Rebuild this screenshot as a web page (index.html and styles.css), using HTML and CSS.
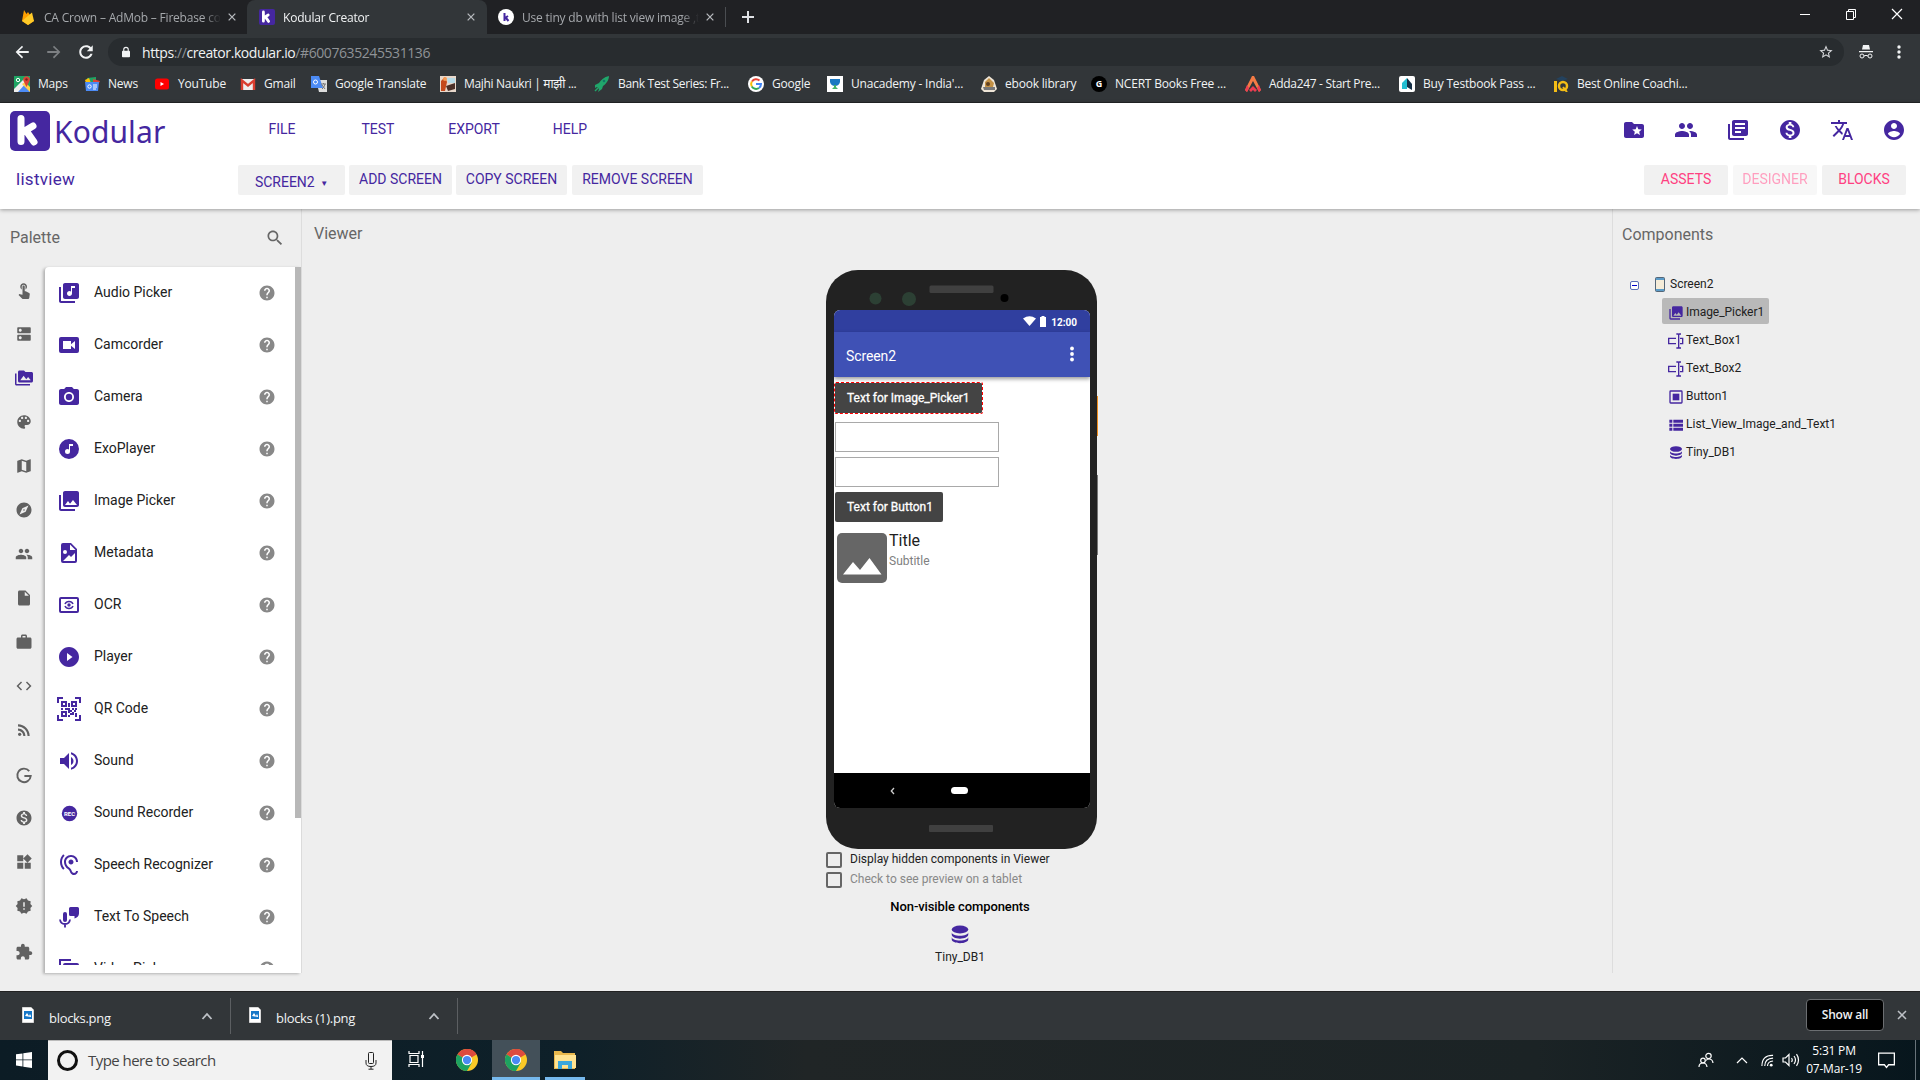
FILE: index.html
```html
<!DOCTYPE html>
<html lang="en">
<head>
    <meta charset="UTF-8">
    <meta name="viewport" content="width=device-width, initial-scale=1.0">
    <title>Kodular Creator</title>
    <link rel="stylesheet" href="styles.css">
</head>
<body>

    <!-- Icon sprite -->
    <svg class="sprite">
        <symbol id="i-help" viewBox="0 0 24 24"><path d="M12 2C6.48 2 2 6.48 2 12s4.48 10 10 10 10-4.48 10-10S17.52 2 12 2zm1 17h-2v-2h2v2zm2.07-7.75l-.9.92C13.45 12.9 13 13.5 13 15h-2v-.5c0-1.1.45-2.1 1.17-2.83l1.24-1.26c.37-.36.59-.86.59-1.41 0-1.1-.9-2-2-2s-2 .9-2 2H8c0-2.21 1.79-4 4-4s4 1.79 4 4c0 .88-.36 1.68-.93 2.25z"/></symbol>
        <symbol id="i-close" viewBox="0 0 24 24"><path d="M4 4l16 16M20 4L4 20" fill="none" stroke="currentColor" stroke-width="3"/></symbol>
        <symbol id="i-people" viewBox="0 0 24 24"><path d="M16 11c1.66 0 2.99-1.34 2.99-3S17.66 5 16 5c-1.66 0-3 1.34-3 3s1.34 3 3 3zm-8 0c1.66 0 2.99-1.34 2.99-3S9.66 5 8 5C6.34 5 5 6.34 5 8s1.34 3 3 3zm0 2c-2.33 0-7 1.17-7 3.5V19h14v-2.5c0-2.33-4.67-3.5-7-3.5zm8 0c-.29 0-.62.02-.97.05 1.16.84 1.97 1.97 1.97 3.45V19h6v-2.5c0-2.33-4.67-3.5-7-3.5z"/></symbol>
        <symbol id="i-money" viewBox="0 0 24 24"><path d="M12 2C6.48 2 2 6.48 2 12s4.48 10 10 10 10-4.48 10-10S17.52 2 12 2zm1.41 16.09V20h-2.67v-1.93c-1.71-.36-3.16-1.46-3.27-3.4h1.96c.1 1.05.82 1.87 2.65 1.87 1.96 0 2.4-.98 2.4-1.59 0-.83-.44-1.61-2.67-2.14-2.48-.6-4.18-1.62-4.18-3.67 0-1.72 1.39-2.84 3.11-3.21V4h2.67v1.95c1.86.45 2.79 1.86 2.85 3.39H14.3c-.05-1.11-.64-1.87-2.22-1.87-1.5 0-2.4.68-2.4 1.64 0 .84.65 1.39 2.67 1.91s4.18 1.39 4.18 3.91c-.01 1.83-1.38 2.83-3.12 3.16z"/></symbol>
        <symbol id="i-photos" viewBox="0 0 24 24"><path d="M22 16V4c0-1.1-.9-2-2-2H8c-1.1 0-2 .9-2 2v12c0 1.1.9 2 2 2h12c1.1 0 2-.9 2-2zm-11-4l2.03 2.71L16 11l4 5H8l3-4zM2 6v14c0 1.1.9 2 2 2h14v-2H4V6H2z"/></symbol>
        <symbol id="i-db" viewBox="0 0 24 24"><ellipse cx="12" cy="6" rx="9" ry="4.3"/><path d="M3 9c0 2.2 4 3.8 9 3.8S21 11.200 21 9v2.800c0 2.200-4 4.200-9 4.200s-9-2-9-4.200zM3 14.200C3 16.400 7 18 12 18s9-1.600 9-3.800V17c0 2.200-4 4-9 4s-9-1.800-9-4z"/></symbol>
        <symbol id="i-textbox" viewBox="0 0 24 24"><path d="M12 8H1v8h11M18 8h4v8h-4M12.500 1.500H15l1 1v19l-1 1h-2.500M19.500 1.500H17l-1 1v19l1 1h2.500" fill="none" stroke="currentColor" stroke-width="2"/></symbol>
        <symbol id="i-kod" viewBox="0 0 40 40"><rect width="40" height="40" rx="5" fill="#4527a0"/><path d="M11 7.500v23M13 21l10-6M17 21l7 10" fill="none" stroke="#fff" stroke-width="7" stroke-linecap="round" stroke-linejoin="round"/></symbol>
        <symbol id="i-chrome" viewBox="0 0 24 24"><circle cx="12" cy="12" r="12" fill="#fbc926"/><path d="M12 12L1.600 6A12 12 0 0 1 22.400 6z" fill="#dd4b3e"/><path d="M12 0a12 12 0 0 1 10.400 6H12z" fill="#dd4b3e"/><path d="M1.600 6A12 12 0 0 0 12 24l5.200-9L12 12z" fill="#1da261"/><circle cx="12" cy="12" r="5.600" fill="#fff"/><circle cx="12" cy="12" r="4.500" fill="#4a8af4"/></symbol>
        <symbol id="i-png" viewBox="0 0 12 16"><path d="M0 0h9l3 3v13H0z" fill="#fff" stroke="#999" stroke-width=".8"/><path d="M2 4h8v8H2z" fill="#1677c8"/><path d="M3 9l2-3 2 3 1-2 1 2v1z" fill="#fff"/></symbol>
        <symbol id="i-up" viewBox="0 0 12 12"><path d="M1.500 9L6 4l4.500 5" fill="none" stroke="currentColor" stroke-width="1.800"/></symbol>
    </svg>

    <!-- Browser tabs -->
    <div class="tab-strip">
        <div class="tab tab-first">
            <svg class="favicon" viewBox="0 0 16 16"><path d="M2 12L4 1l2.500 4L8 3l6 9-6 4z" fill="#ffa000"/><path d="M2 12L12 3.500 14 12l-6 4z" fill="#ffca28"/></svg>
            <span class="tab-title">CA Crown – AdMob – Firebase co</span>
            <svg class="tab-close"><use href="#i-close"/></svg>
        </div>
        <div class="tab tab-active">
            <svg class="favicon"><use href="#i-kod"/></svg>
            <span class="tab-title">Kodular Creator</span>
            <svg class="tab-close"><use href="#i-close"/></svg>
        </div>
        <div class="tab tab-last">
            <svg class="favicon" viewBox="0 0 16 16"><circle cx="8" cy="8" r="8" fill="#fff"/><path d="M6.500 4v8M7 9l3-2M8 9l2.500 3" fill="none" stroke="#4527a0" stroke-width="2"/></svg>
            <span class="tab-title">Use tiny db with list view image ,t</span>
            <svg class="tab-close"><use href="#i-close"/></svg>
        </div>
        <svg class="new-tab" viewBox="0 0 14 14"><path d="M7 1v12M1 7h12" stroke="#dfe1e5" stroke-width="2"/></svg>
        <div class="window-buttons">
            <svg viewBox="0 0 12 12"><path d="M1 6.500h10" stroke="#fff"/></svg>
            <svg viewBox="0 0 12 12"><path d="M1.500 3.500h7v8h-7zM3.500 3V1.500h7v8H9" fill="none" stroke="#fff"/></svg>
            <svg viewBox="0 0 12 12"><path d="M1 1l10 10M11 1L1 11" stroke="#fff" stroke-width="1.200"/></svg>
        </div>
    </div>

    <!-- Address bar -->
    <div class="toolbar">
        <svg class="nav-icon" viewBox="0 0 24 24"><path d="M21 10.800H7.830l5.590-5.390L12 3.500 3.500 12l8.500 8.500 1.410-1.910L7.830 13.200H21z"/></svg>
        <svg class="nav-icon dim" viewBox="0 0 24 24"><path d="M3 10.800h13.170l-5.590-5.390L12 3.500l8.500 8.500-8.500 8.500-1.410-1.910 5.580-5.390H3z"/></svg>
        <svg class="nav-icon" viewBox="0 0 24 24"><path d="M18.500 5.500C17 3.900 14.600 3 12 3c-5 0-9 4-9 9s4 9 9 9c4.200 0 7.700-2.800 8.700-6.700h-2.900c-.9 2.400-3.200 4-5.800 4-3.500 0-6.300-2.800-6.300-6.300S8.500 5.700 12 5.700c1.800 0 3.400.7 4.500 1.900L13 11h8V3z"/></svg>
        <div class="omnibox">
            <svg class="lock" viewBox="0 0 10 13"><path d="M1 5h8c.6 0 1 .4 1 1v6c0 .6-.4 1-1 1H1c-.6 0-1-.4-1-1V6c0-.6.4-1 1-1z"/><path d="M2.200 6V3.500a2.800 2.800 0 0 1 5.600 0V6" fill="none" stroke="currentColor" stroke-width="1.400"/></svg>
            <span class="url">https<i>://</i>creator.kodular.io<i>/#6007635245531136</i></span>
            <svg class="star" viewBox="0 0 24 24"><path d="M22 9.240l-7.190-.62L12 2 9.190 8.630 2 9.240l5.460 4.730L5.820 21 12 17.270 18.180 21l-1.630-7.030L22 9.240zM12 15.400l-3.760 2.270 1-4.280-3.320-2.880 4.380-.38L12 6.100l1.710 4.040 4.380.38-3.320 2.880 1 4.280L12 15.400z"/></svg>
        </div>
        <svg class="incognito" viewBox="0 0 14 14"><path d="M4 0h6l1 4.500H3zM0 6h14v1.300H0z"/><path d="M1 11a2 2 0 1 0 4 0 2 2 0 1 0-4 0zM9 11a2 2 0 1 0 4 0 2 2 0 1 0-4 0zM5 11q2-1.300 4 0" fill="none" stroke="currentColor"/></svg>
        <svg class="kebab" viewBox="0 0 4 14"><circle cx="2" cy="2" r="1.700"/><circle cx="2" cy="7" r="1.700"/><circle cx="2" cy="12" r="1.700"/></svg>
    </div>

    <!-- Bookmarks -->
    <div class="bookmarks">
        <div class="bookmark"><svg viewBox="0 0 16 16"><path d="M0 0h16v16H0z" fill="#1fa463"/><path d="M0 16l9-9 7 7v2z" fill="#4c8bf5"/><path d="M0 13L10 3l3 3-9 10H0z" fill="#eee"/><path d="M8 8l8 8v-5l-5-5z" fill="#ffd04b"/><path d="M12.500 11L9.500 5a3.300 3.300 0 1 1 6 0z" fill="#db4437"/><circle cx="12.500" cy="3.500" r="1.200" fill="#7b231e"/><circle cx="4" cy="4" r="1.700" fill="none" stroke="#fff"/></svg>Maps</div>
        <div class="bookmark"><svg viewBox="0 0 16 16"><path d="M3 2l9-1v6H3z" fill="#1fa463"/><path d="M1 4l4-2 2 5H2z" fill="#ffc107"/><path d="M9 3l7 2-2 4H9z" fill="#db4437"/><path d="M1 6h14l-1 9H2z" fill="#4c8bf5"/><circle cx="5.500" cy="10.500" r="1.700" fill="none" stroke="#fff"/><path d="M9 9h4M9 11h4M9 13h3" stroke="#fff"/></svg>News</div>
        <div class="bookmark"><svg viewBox="0 0 16 16"><rect x="1" y="2.500" width="14" height="11" rx="2.500" fill="#f00"/><path d="M6.500 6v4L10 8z" fill="#fff"/></svg>YouTube</div>
        <div class="bookmark"><svg viewBox="0 0 16 16"><path d="M1 3h14v11H1z" fill="#eee"/><path d="M2 14V4.500l6 5 6-5V14" fill="none" stroke="#d93e30" stroke-width="2.400"/></svg>Gmail</div>
        <div class="bookmark"><svg viewBox="0 0 16 16"><path d="M5 4h11v12H8z" fill="#ddd"/><path d="M0 0h8l4 12H0z" fill="#4c8bf5"/><circle cx="4.500" cy="6" r="2" fill="none" stroke="#fff"/><path d="M10 8h5M12.500 7v1M14 8q-1 4-3 5M11 9l3 4" fill="none" stroke="#777"/></svg>Google Translate</div>
        <div class="bookmark"><svg viewBox="0 0 16 16"><path d="M0 0h16v16H0z" fill="#e8d8cb"/><path d="M1 5l4-4 2 5-2 9H1z" fill="#c44a1d"/><path d="M7 2h8v5H8z" fill="#b7dbe8"/><path d="M6 10l9-3v6l-7 2z" fill="#4b3028"/><circle cx="5" cy="3" r="2" fill="#f69b55"/></svg>Majhi Naukri | माझी ...</div>
        <div class="bookmark"><svg viewBox="0 0 16 16"><path d="M15 0c-5 1-8 4-10 7L1 9v3l2-1 2 2-1 3 4-3 1-3c3-2 6-6 6-10z" fill="#20a66b"/><circle cx="10" cy="5" r="1.300" fill="#176"/><path d="M1 15l3-3" stroke="#20a66b" stroke-width="1.500"/></svg>Bank Test Series: Fr...</div>
        <div class="bookmark"><svg viewBox="0 0 16 16"><circle cx="8" cy="8" r="8" fill="#fff"/><path d="M4 5.500A5 5 0 0 1 11.500 4.500" fill="none" stroke="#ea4335" stroke-width="2"/><path d="M3.800 5.500a5 5 0 0 0 0 5" fill="none" stroke="#fbbc05" stroke-width="2"/><path d="M3.800 10.500A5 5 0 0 0 11 12" fill="none" stroke="#34a853" stroke-width="2"/><path d="M8 8h5a5 5 0 0 1-2 4" fill="none" stroke="#4285f4" stroke-width="2"/></svg>Google</div>
        <div class="bookmark"><svg viewBox="0 0 16 16"><path d="M0 0h16v16H0z" fill="#fff"/><path d="M3 3h10v3q-1 4-5 4T3 6z" fill="#1a78c2"/><path d="M7 9h2v2l2 2H5l2-2z" fill="#44b36a"/></svg>Unacademy - India'...</div>
        <div class="bookmark"><svg viewBox="0 0 16 16"><path d="M8 0l5 4 3 9-3 3H3l-3-3 3-9z" fill="#eee5d7"/><path d="M4 6l4-4 5 5-1 4H4z" fill="#c39146"/><path d="M2 11h12v3H3z" fill="#777"/><circle cx="7" cy="8" r="2" fill="#604020"/></svg>ebook library</div>
        <div class="bookmark"><svg viewBox="0 0 16 16"><circle cx="8" cy="8" r="8" fill="#000"/><text x="8" y="11.200" text-anchor="middle" font-size="9" font-weight="bold" fill="#fff">G</text></svg>NCERT Books Free ...</div>
        <div class="bookmark"><svg viewBox="0 0 16 16"><path d="M7 0h2l7 14-2 2-6-11-6 11-2-2z" fill="#f47b45"/><path d="M8 10l4 4-2 2-2-2-2 2-2-2z" fill="#ed3d52"/><path d="M0 14l2-5 2 3-2 4zM16 14l-2-5-2 3 2 4z" fill="#ed3d52"/></svg>Adda247 - Start Pre...</div>
        <div class="bookmark"><svg viewBox="0 0 16 16"><rect width="16" height="16" rx="2" fill="#fff"/><path d="M3 13V7l5-5v11z" fill="#23bdd1"/><path d="M8 2l5 6v6l-5-3z" fill="#163047"/></svg>Buy Testbook Pass ...</div>
        <div class="bookmark"><svg viewBox="0 0 16 16"><path d="M3 3l6-3 6 3-6 2z" fill="#24425e"/><path d="M2.500 5v11" stroke="#f4bd16" stroke-width="3"/><circle cx="10" cy="10" r="4" fill="none" stroke="#f4bd16" stroke-width="2.500"/><path d="M10 11l4 5" stroke="#f4bd16" stroke-width="2"/></svg>Best Online Coachi...</div>
    </div>

    <!-- Kodular header -->
    <header class="header">
        <div class="header-top">
            <svg class="logo"><use href="#i-kod"/></svg>
            <span class="brand">Kodular</span>
            <nav class="menu">
                <a>FILE</a>
                <a>TEST</a>
                <a>EXPORT</a>
                <a>HELP</a>
            </nav>
            <div class="header-icons">
                <svg viewBox="0 0 24 24"><path d="M20 6h-8l-2-2H4c-1.100 0-1.990.9-1.990 2L2 18c0 1.100.9 2 2 2h16c1.100 0 2-.9 2-2V8c0-1.100-.9-2-2-2zm-2.060 11L15 15.280 12.060 17l.78-3.330-2.590-2.240 3.410-.29L15 8l1.340 3.140 3.410.29-2.590 2.240.78 3.330z"/></svg>
                <svg><use href="#i-people"/></svg>
                <svg viewBox="0 0 24 24"><path d="M4 6H2v14c0 1.100.9 2 2 2h14v-2H4V6zm16-4H8c-1.100 0-2 .9-2 2v12c0 1.100.9 2 2 2h12c1.100 0 2-.9 2-2V4c0-1.100-.9-2-2-2zm-1 9H9V9h10v2zm-4 4H9v-2h6v2zm4-8H9V5h10v2z"/></svg>
                <svg><use href="#i-money"/></svg>
                <svg viewBox="0 0 24 24"><path d="M12.870 15.070l-2.540-2.510.03-.03c1.740-1.940 2.980-4.170 3.710-6.530H17V4h-7V2H8v2H1v1.990h11.170C11.500 7.920 10.440 9.750 9 11.350 8.070 10.320 7.300 9.190 6.690 8h-2c.73 1.630 1.730 3.170 2.980 4.560l-5.090 5.020L4 19l5-5 3.110 3.110.76-2.040zM18.500 10h-2L12 22h2l1.120-3h4.750L21 22h2l-4.500-12zm-2.620 7l1.620-4.330L19.120 17h-3.240z"/></svg>
                <svg viewBox="0 0 24 24"><path d="M12 2C6.480 2 2 6.480 2 12s4.480 10 10 10 10-4.480 10-10S17.520 2 12 2zm0 3c1.660 0 3 1.340 3 3s-1.340 3-3 3-3-1.340-3-3 1.340-3 3-3zm0 14.200c-2.500 0-4.710-1.280-6-3.220.03-1.990 4-3.080 6-3.080 1.990 0 5.970 1.090 6 3.080-1.290 1.940-3.500 3.220-6 3.220z"/></svg>
            </div>
        </div>
        <div class="header-bottom">
            <span class="project">listview</span>
            <div class="screen-buttons">
                <a class="btn btn-screen">SCREEN2 <small>▼</small></a>
                <a class="btn btn-add">ADD SCREEN</a>
                <a class="btn btn-copy">COPY SCREEN</a>
                <a class="btn btn-remove">REMOVE SCREEN</a>
            </div>
            <div class="view-buttons">
                <a class="btn pink">ASSETS</a>
                <a class="btn pink disabled">DESIGNER</a>
                <a class="btn pink">BLOCKS</a>
            </div>
        </div>
    </header>

    <main class="workspace">
        <!-- Palette -->
        <section class="palette">
            <div class="palette-head">
                <h2>Palette</h2>
                <svg viewBox="0 0 24 24"><path d="M15.500 14h-.79l-.28-.27C15.410 12.590 16 11.110 16 9.500 16 5.910 13.090 3 9.500 3S3 5.910 3 9.500 5.910 16 9.500 16c1.610 0 3.090-.59 4.230-1.570l.27.28v.79l5 4.990L20.490 19l-4.990-5zm-6 0C7.010 14 5 11.990 5 9.500S7.010 5 9.500 5 14 7.010 14 9.500 11.990 14 9.500 14z"/></svg>
            </div>
            <div class="palette-body">
                <div class="categories">
                    <svg viewBox="0 0 24 24"><path d="M9 11.240V7.500C9 6.120 10.120 5 11.500 5S14 6.120 14 7.500v3.740c1.210-.81 2-2.180 2-3.740C16 5.010 13.990 3 11.500 3S7 5.010 7 7.500c0 1.560.79 2.930 2 3.740zm9.840 4.630l-4.540-2.260c-.17-.07-.35-.11-.54-.11H13v-6c0-.83-.67-1.500-1.500-1.500S10 6.670 10 7.500v10.740l-3.430-.72c-.08-.01-.15-.03-.24-.03-.31 0-.59.13-.79.33l-.79.8 4.940 4.940c.27.27.65.44 1.060.44h6.790c.75 0 1.330-.55 1.440-1.280l.75-5.270c.01-.07.02-.14.02-.2 0-.62-.38-1.160-.91-1.380z"/></svg>
                    <svg viewBox="0 0 24 24"><path d="M20 13H4c-.55 0-1 .45-1 1v6c0 .55.45 1 1 1h16c.55 0 1-.45 1-1v-6c0-.55-.45-1-1-1zM7 19c-1.100 0-2-.9-2-2s.9-2 2-2 2 .9 2 2-.9 2-2 2zM20 3H4c-.55 0-1 .45-1 1v6c0 .55.45 1 1 1h16c.55 0 1-.45 1-1V4c0-.55-.45-1-1-1zM7 9c-1.100 0-2-.9-2-2s.9-2 2-2 2 .9 2 2-.9 2-2 2z"/></svg>
                    <svg class="current" viewBox="0 0 24 24"><path d="M2 6H0v5h.01L0 20c0 1.100.9 2 2 2h18v-2H2V6zm20-2h-8l-2-2H6c-1.100 0-1.990.9-1.990 2L4 16c0 1.100.9 2 2 2h16c1.100 0 2-.9 2-2V6c0-1.100-.9-2-2-2zM7 15l4.500-6 3.500 4.510 2.500-3.010L21 15H7z"/></svg>
                    <svg viewBox="0 0 24 24"><path d="M12 3c-4.970 0-9 4.030-9 9s4.030 9 9 9c.83 0 1.500-.67 1.500-1.500 0-.39-.15-.74-.39-1.010-.23-.26-.38-.61-.38-.99 0-.83.67-1.500 1.500-1.500H16c2.760 0 5-2.240 5-5 0-4.420-4.030-8-9-8zm-5.500 9c-.83 0-1.500-.67-1.500-1.500S5.670 9 6.500 9 8 9.670 8 10.500 7.330 12 6.500 12zm3-4C8.670 8 8 7.330 8 6.500S8.670 5 9.500 5s1.500.67 1.500 1.500S10.330 8 9.500 8zm5 0c-.83 0-1.500-.67-1.500-1.500S13.670 5 14.500 5s1.500.67 1.500 1.500S15.330 8 14.500 8zm3 4c-.83 0-1.500-.67-1.500-1.500S16.670 9 17.500 9s1.500.67 1.500 1.500-.67 1.500-1.500 1.500z"/></svg>
                    <svg viewBox="0 0 24 24"><path d="M20.500 3l-.16.03L15 5.100 9 3 3.360 4.900c-.21.07-.36.25-.36.48V20.500c0 .28.22.5.5.5l.16-.03L9 18.900l6 2.100 5.640-1.900c.21-.07.36-.25.36-.48V3.500c0-.28-.22-.5-.5-.5zM15 19l-6-2.110V5l6 2.110V19z"/></svg>
                    <svg viewBox="0 0 24 24"><path d="M12 10.900c-.61 0-1.100.49-1.100 1.100s.49 1.100 1.100 1.100c.61 0 1.100-.49 1.100-1.100s-.49-1.100-1.100-1.100zM12 2C6.480 2 2 6.480 2 12s4.480 10 10 10 10-4.480 10-10S17.520 2 12 2zm2.190 12.190L6 18l3.810-8.190L18 6l-3.810 8.190z"/></svg>
                    <svg><use href="#i-people"/></svg>
                    <svg viewBox="0 0 24 24"><path d="M6 2c-1.100 0-1.990.9-1.990 2L4 20c0 1.100.89 2 1.990 2H18c1.100 0 2-.9 2-2V8l-6-6H6zm7 7V3.500L18.500 9H13z"/></svg>
                    <svg viewBox="0 0 24 24"><path d="M20 6h-4V4c0-1.110-.89-2-2-2h-4c-1.110 0-2 .89-2 2v2H4c-1.110 0-1.990.89-1.990 2L2 19c0 1.110.89 2 2 2h16c1.110 0 2-.89 2-2V8c0-1.110-.89-2-2-2zm-6 0h-4V4h4v2z"/></svg>
                    <svg viewBox="0 0 24 24"><path d="M9.400 16.600L4.800 12l4.600-4.600L8 6l-6 6 6 6 1.400-1.400zm5.200 0l4.600-4.600-4.600-4.600L16 6l6 6-6 6-1.400-1.400z"/></svg>
                    <svg viewBox="0 0 24 24"><circle cx="6.180" cy="17.820" r="2.180"/><path d="M4 4.440v2.830c7.030 0 12.730 5.700 12.730 12.730h2.830c0-8.590-6.970-15.560-15.560-15.560zm0 5.660v2.830c3.900 0 7.070 3.170 7.070 7.070h2.830c0-5.470-4.430-9.900-9.900-9.900z"/></svg>
                    <svg class="down" viewBox="0 0 24 24"><path d="M19 5.500A9 9 0 1 0 21 12h-8.500" fill="none" stroke="currentColor" stroke-width="2.500"/></svg>
                    <svg><use href="#i-money"/></svg>
                    <svg viewBox="0 0 24 24"><path d="M13 13v8h8v-8h-8zM3 21h8v-8H3v8zM3 3v8h8V3H3zm13.660-1.310L11 7.340 16.660 13l5.660-5.660-5.660-5.650z"/></svg>
                    <svg viewBox="0 0 24 24"><path d="M23 12l-2.440-2.780.34-3.680-3.610-.82-1.890-3.180L12 3 8.600 1.540 6.710 4.720l-3.610.81.34 3.680L1 12l2.440 2.780-.34 3.690 3.610.82 1.890 3.180L12 21l3.400 1.460 1.890-3.180 3.610-.82-.34-3.680L23 12zm-10 5h-2v-2h2v2zm0-4h-2V7h2v6z"/></svg>
                    <svg class="down" viewBox="0 0 24 24"><path d="M20.500 11H19V7c0-1.100-.9-2-2-2h-4V3.500C13 2.120 11.880 1 10.500 1S8 2.120 8 3.500V5H4c-1.100 0-1.990.9-1.990 2v3.800H3.500c1.490 0 2.700 1.210 2.700 2.700s-1.210 2.700-2.700 2.700H2V20c0 1.100.9 2 2 2h3.800v-1.500c0-1.490 1.210-2.700 2.700-2.700 1.490 0 2.700 1.210 2.700 2.700V22H17c1.100 0 2-.9 2-2v-4h1.500c1.380 0 2.500-1.120 2.500-2.500S21.880 11 20.500 11z"/></svg>
                </div>
                <div class="component-panel">
                    <div class="component-list">
                        <div class="item"><svg viewBox="0 0 24 24"><path d="M20 2H8c-1.100 0-2 .9-2 2v12c0 1.100.9 2 2 2h12c1.100 0 2-.9 2-2V4c0-1.100-.9-2-2-2zm-2 5h-3v5.500c0 1.380-1.120 2.500-2.500 2.500S10 13.880 10 12.500s1.120-2.500 2.500-2.500c.57 0 1.080.19 1.500.51V5h4v2zM4 6H2v14c0 1.100.9 2 2 2h14v-2H4V6z"/></svg><span>Audio Picker</span><svg class="help"><use href="#i-help"/></svg></div>
                        <div class="item"><svg viewBox="0 0 24 24"><path d="M18 16l-4-3.200V16H6V8h8v3.200L18 8m2-4H4a2 2 0 0 0-2 2v12a2 2 0 0 0 2 2h16a2 2 0 0 0 2-2V6a2 2 0 0 0-2-2z"/></svg><span>Camcorder</span><svg class="help"><use href="#i-help"/></svg></div>
                        <div class="item"><svg viewBox="0 0 24 24"><circle cx="12" cy="12" r="3.200"/><path d="M9 2L7.170 4H4c-1.100 0-2 .9-2 2v12c0 1.100.9 2 2 2h16c1.100 0 2-.9 2-2V6c0-1.100-.9-2-2-2h-3.170L15 2H9zm3 15c-2.760 0-5-2.240-5-5s2.240-5 5-5 5 2.240 5 5-2.240 5-5 5z"/></svg><span>Camera</span><svg class="help"><use href="#i-help"/></svg></div>
                        <div class="item"><svg viewBox="0 0 24 24"><path d="M16 9V7h-4v5.500c-.42-.31-.93-.5-1.500-.5A2.500 2.500 0 0 0 8 14.500a2.500 2.500 0 0 0 2.500 2.500 2.500 2.500 0 0 0 2.500-2.500V9h3M12 2a10 10 0 0 1 10 10 10 10 0 0 1-10 10A10 10 0 0 1 2 12 10 10 0 0 1 12 2z" fill-rule="evenodd"/></svg><span>ExoPlayer</span><svg class="help"><use href="#i-help"/></svg></div>
                        <div class="item"><svg><use href="#i-photos"/></svg><span>Image Picker</span><svg class="help"><use href="#i-help"/></svg></div>
                        <div class="item"><svg viewBox="0 0 24 24"><path fill-rule="evenodd" d="M13 9h5.500L13 3.500V9M6 2h8l6 6v12a2 2 0 0 1-2 2H6a2 2 0 0 1-2-2V4a2 2 0 0 1 2-2m0 18h12v-8l-4 4-2-2-6 6M8 9a2 2 0 0 0-2 2 2 2 0 0 0 2 2 2 2 0 0 0 2-2 2 2 0 0 0-2-2z"/></svg><span>Metadata</span><svg class="help"><use href="#i-help"/></svg></div>
                        <div class="item"><svg viewBox="0 0 24 24"><rect x="3" y="5" width="18" height="14" rx="1" fill="none" stroke="currentColor" stroke-width="2"/><circle cx="12" cy="12" r="1.700"/><path d="M8 11q1-2.500 4-2.500t4 2.500M8 13q1 2.500 4 2.500t4-2.500" fill="none" stroke="currentColor" stroke-width="1.500"/></svg><span>OCR</span><svg class="help"><use href="#i-help"/></svg></div>
                        <div class="item"><svg viewBox="0 0 24 24"><path d="M12 2C6.480 2 2 6.480 2 12s4.480 10 10 10 10-4.480 10-10S17.520 2 12 2zm-2 14V8l5.500 4-5.500 4z"/></svg><span>Player</span><svg class="help"><use href="#i-help"/></svg></div>
                        <div class="item"><svg viewBox="0 0 24 24"><path d="M1 6V1h5M18 1h5v5M23 18v5h-5M6 23H1v-5M5 5h4v4H5zM15 5h4v4h-4zM5 15h4v4H5z" fill="none" stroke="currentColor" stroke-width="2"/><path d="M11 6h2v4h-2zM4 11h2v2H4zM8 11h5v2H8zM11 13h2v3h-2zM13 13h2v2h-2zM15 11h2v2h-2zM18 11h2v2h-2zM17 13h2v2h-2zM15 15h2v3h-2zM11 18h2v2h-2zM13 16h2v2h-2zM18 16h2v4h-2z"/></svg><span>QR Code</span><svg class="help"><use href="#i-help"/></svg></div>
                        <div class="item"><svg viewBox="0 0 24 24"><path d="M3 9v6h4l5 5V4L7 9H3zm13.500 3c0-1.770-1.020-3.290-2.500-4.030v8.050c1.480-.73 2.500-2.250 2.500-4.020zM14 3.230v2.060c2.890.86 5 3.540 5 6.710s-2.110 5.850-5 6.710v2.060c4.010-.91 7-4.490 7-8.770s-2.990-7.860-7-8.770z"/></svg><span>Sound</span><svg class="help"><use href="#i-help"/></svg></div>
                        <div class="item"><svg viewBox="0 0 24 24"><circle cx="12.500" cy="12.500" r="7.700"/><text class="rec" x="12.500" y="15" text-anchor="middle">REC</text></svg><span>Sound Recorder</span><svg class="help"><use href="#i-help"/></svg></div>
                        <div class="item"><svg viewBox="0 0 24 24"><path d="M17 20c-.29 0-.56-.06-.76-.15-.71-.37-1.210-.88-1.710-2.380-.51-1.560-1.470-2.290-2.390-3-.79-.61-1.610-1.240-2.320-2.530C9.290 10.980 9 9.930 9 9c0-2.800 2.200-5 5-5s5 2.200 5 5h2c0-3.930-3.070-7-7-7S7 5.070 7 9c0 1.260.38 2.650 1.070 3.900.91 1.650 1.980 2.480 2.850 3.150.81.62 1.390 1.070 1.710 2.050.6 1.820 1.370 2.840 2.730 3.550.51.23 1.070.35 1.640.35 2.210 0 4-1.790 4-4h-2c0 1.100-.9 2-2 2zM7.640 2.640L6.220 1.220C4.230 3.210 3 5.960 3 9s1.230 5.790 3.220 7.780l1.410-1.410C6.010 13.740 5 11.490 5 9s1.010-4.740 2.640-6.360zM11.500 9c0 1.380 1.120 2.500 2.500 2.500s2.500-1.120 2.500-2.500-1.120-2.500-2.500-2.500-2.500 1.120-2.500 2.500z"/></svg><span>Speech Recognizer</span><svg class="help"><use href="#i-help"/></svg></div>
                        <div class="item"><svg viewBox="0 0 24 24"><path d="M13.500 2h7A1.500 1.500 0 0 1 22 3.500v5C22 11 20 13 17.500 13.500V11h-4A1.500 1.500 0 0 1 12 9.500v-6A1.500 1.500 0 0 1 13.500 2z"/><rect x="6" y="7" width="4" height="10" rx="2"/><path d="M3 14.500q.5 4.500 5 4.500t5-4.500M8 19v3.500" fill="none" stroke="currentColor" stroke-width="1.800"/></svg><span>Text To Speech</span><svg class="help"><use href="#i-help"/></svg></div>
                        <div class="item"><svg viewBox="0 0 24 24"><path d="M3 18V3h11" fill="none" stroke="currentColor" stroke-width="2"/><path d="M8 6h12a2 2 0 0 1 2 2v12a2 2 0 0 1-2 2H8a2 2 0 0 1-2-2V8a2 2 0 0 1 2-2zm1 3v10h11V9z" fill-rule="evenodd"/></svg><span>Video Picker</span><svg class="help"><use href="#i-help"/></svg></div>
                    </div>
                    <div class="scrollbar"></div>
                </div>
            </div>
        </section>

        <!-- Viewer -->
        <section class="viewer">
            <h2>Viewer</h2>
            <div class="phone">
                <svg class="phone-top" viewBox="0 0 271 40"><circle cx="49.500" cy="28.500" r="6" fill="#2c4034"/><circle cx="83" cy="29" r="7" fill="#2c4034"/><rect x="103.500" y="15.500" width="64" height="7.500" rx="1.500" fill="#404040"/><circle cx="178.500" cy="28" r="4" fill="#000"/></svg>
                <div class="screen">
                    <div class="status-bar">
                        <svg class="wifi" viewBox="0 0 13 10"><path d="M0 2.500Q6.500-2 13 2.500L6.500 10z"/></svg>
                        <svg class="battery" viewBox="0 0 6 11"><path d="M1.500 0h3v1H6v10H0V1h1.500z"/></svg>
                        <span>12:00</span>
                    </div>
                    <div class="title-bar">
                        <span>Screen2</span>
                        <svg viewBox="0 0 4 16"><circle cx="2" cy="2.500" r="1.900"/><circle cx="2" cy="8" r="1.900"/><circle cx="2" cy="13.500" r="1.900"/></svg>
                    </div>
                    <div class="form">
                        <div class="form-button selected">Text for Image_Picker1</div>
                        <div class="form-input"></div>
                        <div class="form-input"></div>
                        <div class="form-button">Text for Button1</div>
                        <div class="list-row">
                            <svg viewBox="0 0 50 50"><rect width="50" height="50" rx="5" fill="#666"/><path d="M6 41.500l10-12.500 7 8 9.500-12L44.500 41.500z" fill="#fff"/></svg>
                            <div>
                                <div class="row-title">Title</div>
                                <div class="row-subtitle">Subtitle</div>
                            </div>
                        </div>
                    </div>
                    <div class="nav-bar">
                        <svg viewBox="0 0 5 8"><path d="M4 1L1.300 4 4 7" fill="none" stroke="#ccc" stroke-width="1.300"/></svg>
                        <div class="home"></div>
                    </div>
                </div>
                <div class="phone-chin"></div>
                <div class="side-key power"></div>
                <div class="side-key volume"></div>
            </div>
            <div class="options">
                <label><span class="box"></span>Display hidden components in Viewer</label>
                <label class="muted"><span class="box"></span>Check to see preview on a tablet</label>
            </div>
            <div class="nonvisible">
                <strong>Non-visible components</strong>
                <svg><use href="#i-db"/></svg>
                <span>Tiny_DB1</span>
            </div>
        </section>

        <!-- Components tree -->
        <section class="components">
            <h2>Components</h2>
            <div class="tree-root">
                <svg class="toggle" viewBox="0 0 9 9"><rect x=".5" y=".5" width="8" height="8" rx="1.500" fill="#fff" stroke="#5a6fb5"/><path d="M2 4.500h5" stroke="#00c"/></svg>
                <svg class="device" viewBox="0 0 10 15"><rect x=".5" y=".5" width="9" height="14" rx="1" fill="#5b9bc8" stroke="#567"/><path d="M1 3h8v9H1z" fill="#f5ecd9"/></svg>
                Screen2
            </div>
            <div class="tree-item active"><svg><use href="#i-photos"/></svg>Image_Picker1</div>
            <div class="tree-item"><svg><use href="#i-textbox"/></svg>Text_Box1</div>
            <div class="tree-item"><svg><use href="#i-textbox"/></svg>Text_Box2</div>
            <div class="tree-item"><svg viewBox="0 0 24 24"><rect x="3" y="3" width="18" height="18" rx="1" fill="none" stroke="currentColor" stroke-width="2"/><path d="M7 7h10v10H7z"/></svg>Button1</div>
            <div class="tree-item"><svg viewBox="0 0 24 24"><path d="M2 4h4.500v4.500H2zM8 4h14.500v4.500H8zM2 10h4.500v4.500H2zM8 10h14.500v4.500H8zM2 16h4.500v4.500H2zM8 16h14.500v4.500H8z"/></svg>List_View_Image_and_Text1</div>
            <div class="tree-item"><svg><use href="#i-db"/></svg>Tiny_DB1</div>
        </section>
    </main>

    <!-- Downloads -->
    <div class="downloads">
        <div class="download"><svg class="file"><use href="#i-png"/></svg><span>blocks.png</span><svg class="up"><use href="#i-up"/></svg></div>
        <div class="download"><svg class="file"><use href="#i-png"/></svg><span>blocks (1).png</span><svg class="up"><use href="#i-up"/></svg></div>
        <div class="show-all">Show all</div>
        <svg class="close"><use href="#i-close"/></svg>
    </div>

    <!-- Windows taskbar -->
    <div class="taskbar">
        <div class="start"><svg viewBox="0 0 16 16"><path d="M0 2.300l6.500-.9v6.100H0zM7.300 1.300L16 0v7.500H7.300zM0 8.300h6.500v6.200L0 13.600zM7.300 8.300H16V16l-8.700-1.300z" fill="#fff"/></svg></div>
        <div class="search">
            <span class="cortana"></span>
            <span class="hint">Type here to search</span>
            <svg viewBox="0 0 12 18"><rect x="3.500" y=".5" width="5" height="11" rx="1"/><path d="M1 8v3q0 3.500 5 3.500T11 11V8M6 14.500V17M3.500 17.200h5"/></svg>
        </div>
        <div class="task"><svg class="taskview" viewBox="0 0 17 16"><path d="M2 4.500h8v7H2zM1 0v2.500h10V0M1 16v-2.500h10V16M14.500 0v16" fill="none" stroke="#fff" stroke-width="1.200"/><path d="M13 4h3v3h-3z" fill="#fff"/></svg></div>
        <div class="task"><svg><use href="#i-chrome"/></svg></div>
        <div class="task task-active"><svg><use href="#i-chrome"/></svg></div>
        <div class="task task-open"><svg viewBox="0 0 22 20"><path d="M0 1h7l2 2h12v16H0z" fill="#e9b84c"/><path d="M1 5h21v13H1z" fill="#ffe391"/><path d="M4 19v-8h14v8h-4v-4H8v4z" fill="#3ba7dc"/></svg></div>
        <div class="tray">
            <svg class="people" viewBox="0 0 16 16"><circle cx="10.500" cy="4" r="2.700"/><circle cx="5" cy="8.500" r="2.300"/><path d="M1 15q0-4 4-4 3.500 0 4 4M8 8.500q1-1.500 3-1.500 3.500 0 4 4"/></svg>
            <svg class="caret" viewBox="0 0 12 12"><path d="M1 9l5-5 5 5"/></svg>
            <svg class="net" viewBox="0 0 14 14"><path d="M1 13Q1 1 13 1.500M4 13Q4 5 13 4.500M7 13Q7 8 13 7.500"/><circle cx="11" cy="12" r="1.500" fill="#fff" stroke="none"/></svg>
            <svg class="vol" viewBox="0 0 18 14"><path d="M1 5h2.500L7 1.500v11L3.500 9H1zM9.500 5q1.500 2 0 4M12 3q3 4 0 8M14.500 1.200q4 5.800 0 11.600"/></svg>
            <div class="clock">5:31 PM<br>07-Mar-19</div>
            <svg class="action" viewBox="0 0 16 16"><path d="M.6 1h14.800v11H10l-2 2.500L6 12H.6z"/></svg>
            <div class="peek"></div>
        </div>
    </div>

</body>
</html>
```

FILE: styles.css
```css
* {
    box-sizing: border-box;
}

body {
    margin: 0;
    width: 1920px;
    height: 1080px;
    overflow: hidden;
    display: flex;
    flex-direction: column;
    background-color: #eee;
    font-family: Roboto, 'Liberation Sans', sans-serif;
    color: #212121;
}

svg {
    display: block;
    flex: none;
    fill: currentColor;
}

.sprite {
    display: none;
}

h2 {
    margin: 0;
    font-size: 16px;
    font-weight: 400;
    color: #666;
}

/* Browser chrome */

.tab-strip {
    display: flex;
    align-items: center;
    height: 34px;
    background-color: #202124;
    font-family: 'Open Sans', sans-serif;
    font-size: 12px;
    letter-spacing: -0.2px;
    color: #a5a8ac;
}

.tab {
    display: flex;
    align-items: center;
    height: 34px;
    padding-right: 10px;
}

.tab-first {
    width: 247px;
    padding-left: 20px;
}

.tab-active {
    width: 240px;
    padding-left: 12px;
    padding-right: 11px;
    background-color: #323639;
    border-radius: 8px 8px 0 0;
    color: #f1f3f4;
}

.tab-last {
    width: 239px;
    height: 20px;
    padding-left: 11px;
    border-right: 1px solid #4a4d51;
}

.favicon {
    width: 16px;
    height: 16px;
    margin-right: 8px;
}

.tab-title {
    flex: 1;
    overflow: hidden;
    white-space: nowrap;
    -webkit-mask-image: linear-gradient(to right, #000 90%, transparent);
    mask-image: linear-gradient(to right, #000 90%, transparent);
}

.tab-close {
    width: 10px;
    height: 10px;
    margin-left: 6px;
    color: #b8bbbf;
}

.new-tab {
    width: 14px;
    height: 14px;
    margin-left: 15px;
}

.window-buttons {
    display: flex;
    gap: 34px;
    margin: -6px 17px 0 auto;
}

.window-buttons svg {
    width: 12px;
    height: 12px;
}

.toolbar {
    display: flex;
    align-items: center;
    height: 36px;
    padding-left: 13px;
    background-color: #323639;
    color: #f1f3f4;
}

.nav-icon {
    width: 18px;
    height: 18px;
    margin-right: 14px;
}

.nav-icon.dim {
    color: #7d8083;
}

.omnibox {
    display: flex;
    align-items: center;
    width: 1736px;
    height: 28px;
    margin-left: -1px;
    padding: 0 10px 0 14px;
    border-radius: 14px;
    background-color: #282c2f;
}

.lock {
    width: 8px;
    height: 12px;
    margin-right: 12px;
}

.url {
    flex: 1;
    font-family: 'Open Sans', sans-serif;
    font-size: 14px;
    letter-spacing: -0.42px;
}

.url i {
    font-style: normal;
    color: #8f9397;
}

.star {
    width: 16px;
    height: 16px;
    color: #d5d7da;
}

.incognito {
    width: 14px;
    height: 14px;
    margin-left: 15px;
}

.kebab {
    width: 4px;
    height: 14px;
    margin-left: 24px;
}

.bookmarks {
    display: flex;
    align-items: center;
    height: 33px;
    padding: 0 0 5px 14px;
    background-color: #323639;
    border-bottom: 1px solid #222527;
    font-family: 'Open Sans', 'Noto Sans', sans-serif;
    font-size: 12px;
    letter-spacing: -0.2px;
    color: #f1f3f4;
}

.bookmark {
    display: flex;
    align-items: center;
    flex: none;
    width: 154px;
    height: 28px;
    white-space: nowrap;
}

.bookmark svg {
    width: 16px;
    height: 16px;
    margin-right: 8px;
}

.bookmark:nth-child(1) { width: 70px; }
.bookmark:nth-child(2) { width: 70px; }
.bookmark:nth-child(3) { width: 86px; }
.bookmark:nth-child(4) { width: 71px; }
.bookmark:nth-child(5) { width: 129px; }
.bookmark:nth-child(8) { width: 79px; }
.bookmark:nth-child(10) { width: 110px; }

.bookmark:nth-child(6),
.bookmark:nth-child(7),
.bookmark:nth-child(12) {
    letter-spacing: -0.32px;
}

/* Header */

.header {
    position: relative;
    height: 106px;
    background-color: #fff;
    box-shadow: 0 1px 4px rgba(0, 0, 0, 0.35);
    color: #4527a0;
}

.header-top {
    display: flex;
    height: 56px;
    padding: 8px 14px 0 10px;
}

.logo {
    width: 40px;
    height: 40px;
}

.brand {
    width: 166px;
    padding-left: 4px;
    font-family: 'Noto Sans', sans-serif;
    font-size: 30px;
    line-height: 42px;
    letter-spacing: 0.1px;
}

.menu {
    display: flex;
    padding-left: 18px;
    font-size: 14px;
    line-height: 36px;
}

.menu a {
    width: 96px;
    text-align: center;
}

.header-icons {
    display: flex;
    gap: 28px;
    margin-left: auto;
    padding-top: 7px;
}

.header-icons svg {
    width: 24px;
    height: 24px;
}

.header-bottom {
    display: flex;
    align-items: flex-start;
    padding: 6px 14px 0 16px;
}

.project {
    width: 222px;
    font-size: 17px;
    line-height: 28px;
    letter-spacing: 0.3px;
}

.screen-buttons {
    display: flex;
    gap: 4px;
}

.view-buttons {
    display: flex;
    gap: 5px;
    margin-left: auto;
}

.btn {
    height: 30px;
    border-radius: 2px;
    background-color: #f1f1f1;
    font-size: 14px;
    line-height: 29px;
    text-align: center;
    white-space: nowrap;
}

.btn-screen {
    width: 107px;
    line-height: 34px;
}

.btn-screen small {
    margin-left: 2px;
    font-size: 8px;
    vertical-align: 1px;
}

.btn-add {
    width: 103px;
}

.btn-copy {
    width: 111px;
}

.btn-remove {
    width: 131px;
    margin-left: 1px;
}

.btn.pink {
    width: 84px;
    color: #ff4081;
}

.btn.disabled {
    opacity: 0.5;
}

/* Workspace */

.workspace {
    display: flex;
    height: 782px;
    padding-bottom: 18px;
}

.palette {
    width: 302px;
    border-right: 1px solid #ddd;
}

.palette-head {
    display: flex;
    align-items: center;
    justify-content: space-between;
    height: 58px;
    padding: 0 16px 1px 10px;
    color: #666;
}

.palette-head svg {
    width: 20px;
    height: 20px;
}

.palette-body {
    display: flex;
    height: 706px;
}

.categories {
    display: flex;
    flex-direction: column;
    gap: 26px;
    width: 45px;
    padding: 14px 0 0 15px;
    color: #616161;
}

.categories svg {
    width: 18px;
    height: 18px;
}

.categories .current {
    color: #4527a0;
}

.categories .down {
    position: relative;
    top: 2px;
}

.component-panel {
    display: flex;
    width: 256px;
    border-radius: 4px 0 0 0;
    background-color: #fff;
    box-shadow: -2px 1px 3px rgba(0, 0, 0, 0.25);
}

.component-list {
    width: 250px;
    height: 698px;
    overflow: hidden;
}

.item {
    display: flex;
    align-items: center;
    height: 52px;
    padding: 0 19px 0 12px;
    color: #4527a0;
}

.item span {
    flex: 1;
    margin: -2px 0 0 13px;
    font-size: 14px;
    color: #212121;
}

.item svg {
    width: 24px;
    height: 24px;
}

.item .help {
    width: 18px;
    height: 18px;
    color: #888;
}

.rec {
    font-size: 6px;
    font-weight: bold;
    fill: #fff;
}

.scrollbar {
    width: 6px;
    height: 551px;
    background-color: #b8b8b8;
}

.viewer {
    flex: 1;
    display: flex;
    flex-direction: column;
    padding-left: 12px;
}

.viewer h2 {
    height: 61px;
    padding-top: 15px;
}

.phone {
    position: relative;
    width: 271px;
    height: 579px;
    margin-left: 512px;
    padding: 0 7px 0 8px;
    border-radius: 32px;
    background-color: #222;
}

.phone-top {
    width: 271px;
    height: 40px;
    margin-left: -8px;
}

.screen {
    display: flex;
    flex-direction: column;
    height: 498px;
    border-radius: 6px;
    overflow: hidden;
    background-color: #fff;
}

.status-bar {
    display: flex;
    align-items: center;
    justify-content: flex-end;
    height: 22px;
    padding: 3px 13px 0 0;
    background-color: #303f9f;
    font-size: 10px;
    font-weight: 700;
    color: #fff;
}

.wifi {
    width: 13px;
    height: 10px;
    margin: -3px 4px 0 0;
}

.battery {
    width: 6px;
    height: 11px;
    margin: -2px 5px 0 0;
}

.title-bar {
    display: flex;
    align-items: center;
    justify-content: space-between;
    height: 45px;
    padding: 3px 16px 0 12px;
    background-color: #3f51b5;
    box-shadow: 0 2px 4px rgba(0, 0, 0, 0.4);
    font-size: 14px;
    letter-spacing: -0.1px;
    color: #fff;
}

.title-bar svg {
    width: 4px;
    height: 16px;
    margin-top: -5px;
}

.form {
    flex: 1;
    display: flex;
    flex-direction: column;
    align-items: flex-start;
    padding: 5px 1px;
}

.form-button {
    width: 108px;
    height: 30px;
    margin-bottom: 10px;
    padding-left: 12px;
    border-radius: 2px;
    background-color: #444;
    font-size: 12px;
    line-height: 30px;
    white-space: nowrap;
    color: #fff;
    -webkit-text-stroke: 0.3px #fff;
}

.form-button.selected {
    width: 149px;
    height: 32px;
    margin: 0 0 8px -1px;
    border: 1px dashed #f00;
    background-clip: padding-box;
}

.form-input {
    width: 164px;
    height: 30px;
    margin-bottom: 5px;
    border: 1px solid #a9a9a9;
}

.list-row {
    display: flex;
    gap: 2px;
    padding: 1px 2px;
}

.list-row svg {
    width: 50px;
    height: 50px;
}

.row-title {
    font-size: 16px;
    line-height: 15px;
}

.row-subtitle {
    margin-top: 6px;
    font-size: 12px;
    line-height: 14px;
    color: #808080;
}

.nav-bar {
    display: flex;
    align-items: center;
    height: 35px;
    padding-left: 56px;
    background-color: #000;
}

.nav-bar svg {
    width: 5px;
    height: 8px;
}

.home {
    width: 17px;
    height: 7px;
    margin-left: 56px;
    border-radius: 4px;
    background-color: #fff;
}

.phone-chin {
    width: 64px;
    height: 7px;
    margin: 17px 0 0 95px;
    border-radius: 1px;
    background-color: #404040;
}

.side-key {
    position: absolute;
    left: 271px;
    width: 1px;
}

.power {
    top: 126px;
    height: 40px;
    background-color: #f08c1a;
}

.volume {
    top: 205px;
    height: 80px;
    background-color: #777;
}

.options {
    display: flex;
    flex-direction: column;
    gap: 4px;
    margin: 3px 0 0 512px;
    font-size: 12px;
}

.options label {
    display: flex;
    height: 16px;
    line-height: 15px;
}

.options .muted {
    color: #888;
}

.box {
    width: 16px;
    height: 16px;
    margin-right: 8px;
    border: 2px solid #666;
    border-radius: 2px;
}

.nonvisible {
    display: flex;
    flex-direction: column;
    align-items: center;
    width: 160px;
    margin: 11px 0 0 566px;
    font-size: 12px;
    line-height: 15px;
}

.nonvisible strong {
    font-size: 13px;
    font-weight: 500;
    letter-spacing: -0.1px;
    color: #000;
    white-space: nowrap;
}

.nonvisible svg {
    width: 22px;
    height: 22px;
    margin: 10px 0 4px;
    color: #4527a0;
}

.components {
    width: 308px;
    border-left: 1px solid #ddd;
    padding-left: 9px;
    font-size: 12px;
}

.components h2 {
    height: 61px;
    padding-top: 16px;
}

.tree-root {
    display: flex;
    align-items: center;
    height: 28px;
    padding-left: 8px;
}

.toggle {
    width: 9px;
    height: 9px;
    margin: 2px 16px 0 0;
}

.device {
    width: 10px;
    height: 15px;
    margin: 1px 5px 0 0;
}

.tree-item {
    display: flex;
    align-items: center;
    width: max-content;
    height: 26px;
    margin: 0 0 2px 40px;
    padding: 2px 5px 0 6px;
    border-radius: 2px;
}

.tree-item.active {
    background-color: #b9b9b9;
    letter-spacing: -0.05px;
}

.tree-item svg {
    width: 16px;
    height: 16px;
    margin: 1px 2px 0 0;
    color: #4527a0;
}

/* Downloads bar */

.downloads {
    display: flex;
    align-items: center;
    height: 49px;
    background-color: #323639;
    border-top: 1px solid #222;
    font-family: 'Open Sans', sans-serif;
    font-size: 13px;
    color: #f1f3f4;
}

.download {
    display: flex;
    align-items: center;
    width: 231px;
    height: 36px;
    padding: 0 17px 0 22px;
    border-right: 1px solid #5c5f62;
}

.download + .download {
    width: 227px;
    padding-left: 18px;
}

.file {
    width: 12px;
    height: 16px;
    margin-top: -2px;
}

.download span {
    flex: 1;
    padding: 4px 0 0 15px;
    letter-spacing: -0.3px;
}

.up {
    width: 12px;
    height: 12px;
    color: #bdc1c6;
}

.show-all {
    width: 78px;
    height: 32px;
    margin: -2px 12px 0 auto;
    border: 1px solid #6b6e71;
    border-radius: 4px;
    background-color: #000;
    font-size: 12px;
    font-weight: 600;
    line-height: 29px;
    text-align: center;
    letter-spacing: -0.2px;
}

.close {
    width: 12px;
    height: 12px;
    margin: -2px 12px 0 0;
    color: #bdc1c6;
}

/* Taskbar */

.taskbar {
    display: flex;
    height: 40px;
    background: linear-gradient(to right, #0c1c25, #0e2029 30%, #202526 42%, #1b2325 80%, #07161d);
    font-family: 'Open Sans', sans-serif;
    color: #fff;
}

.start {
    width: 48px;
    padding: 12px 16px;
}

.start svg {
    width: 16px;
    height: 16px;
}

.search {
    display: flex;
    align-items: center;
    width: 344px;
    padding: 0 15px 0 9px;
    border-top: 1px solid #bbb;
    background-color: #f2f2f2;
    font-size: 15px;
    letter-spacing: -0.55px;
    color: #444;
}

.search svg {
    width: 12px;
    height: 18px;
    margin-left: auto;
    fill: none;
    stroke: #222;
}

.cortana {
    width: 21px;
    height: 21px;
    margin-right: 10px;
    border: 3px solid #111;
    border-radius: 50%;
}

.hint {
    margin-top: -2px;
}

.task {
    display: flex;
    align-items: center;
    justify-content: center;
    width: 50px;
}

.task svg {
    width: 22px;
    height: 22px;
}

.task .taskview {
    width: 17px;
    height: 16px;
    margin: -2px 2px 0 0;
}

.task-active {
    width: 48px;
    padding-top: 3px;
    border-bottom: 3px solid #76b9ed;
    background-color: #435059;
}

.task-open {
    width: 40px;
    margin-left: 5px;
    padding-top: 3px;
    border-bottom: 3px solid #76b9ed;
}

.tray {
    display: flex;
    align-items: center;
    margin-left: auto;
}

.tray svg {
    fill: none;
    stroke: #fff;
    stroke-width: 1.2px;
}

.people {
    width: 16px;
    height: 16px;
    margin-right: 22px;
}

.caret {
    width: 12px;
    height: 12px;
    margin-right: 13px;
}

.net {
    width: 13px;
    height: 13px;
    margin-right: 8px;
}

.vol {
    width: 18px;
    height: 14px;
}

.clock {
    width: 68px;
    font-size: 12px;
    line-height: 18px;
    text-align: center;
    letter-spacing: -0.2px;
}

.tray .action {
    width: 17px;
    height: 17px;
    margin: 0 20px 0 10px;
}

.peek {
    width: 5px;
    height: 40px;
    border-left: 1px solid #68737a;
}
```
